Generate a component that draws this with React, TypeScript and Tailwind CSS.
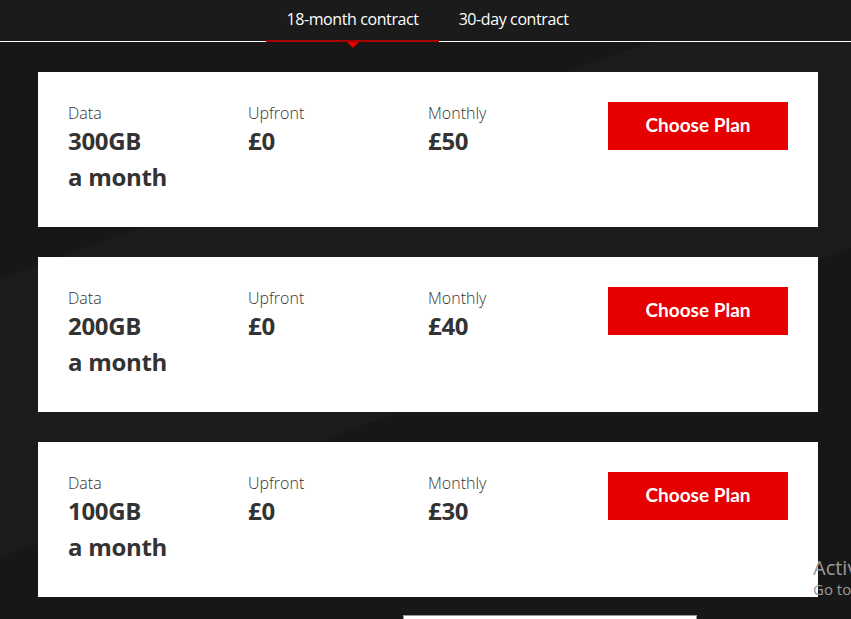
import React from "react";

const plans = [
  { data: "300GB", upfront: "£0", monthly: "£50" },
  { data: "200GB", upfront: "£0", monthly: "£40" },
  { data: "100GB", upfront: "£0", monthly: "£30" },
];

function Col({ label, value, sub }: { label: string; value: string; sub?: string }) {
  return (
    <div className="w-[180px] shrink-0">
      <div className="text-[16px] leading-[22px] font-light text-[#333]">{label}</div>
      <div className="text-[24px] leading-[36px] font-bold text-[#333] tracking-[-0.3px] -mt-[1px]">
        <div>{value}</div>
        {sub && <div>{sub}</div>}
      </div>
    </div>
  );
}

export default function App() {
  return (
    <div
      className="relative w-full h-[619px] overflow-hidden bg-[#171717]"
      style={{ fontFamily: '"Open Sans", "Noto Sans", sans-serif' }}
    >
      <div className="absolute inset-0 bg-[linear-gradient(160deg,transparent_0%,transparent_30%,rgba(255,255,255,0.018)_30%,rgba(255,255,255,0.018)_60%,transparent_60%)]" />
      <div className="relative">
        <div className="h-[42px] border-b border-white flex justify-center pl-[4px] bg-[#1b1b1b]">
          <div className="relative px-5 h-full flex items-start pt-[7px] text-white text-[16px] leading-[24px] tracking-[-0.4px]">
            18-month contract
            <div className="absolute left-0 right-0 bottom-[-1px] h-[2px] bg-[#a80000]" />
            <div className="absolute left-1/2 -translate-x-1/2 bottom-[-7px] w-0 h-0 border-l-[6px] border-r-[6px] border-t-[6px] border-l-transparent border-r-transparent border-t-[#e60000]" />
          </div>
          <div className="px-5 h-full flex items-start pt-[7px] text-white text-[16px] leading-[24px] tracking-[-0.4px]">
            30-day contract
          </div>
        </div>
        <div className="ml-[38px] w-[780px] mt-[30px] flex flex-col gap-[30px]">
          {plans.map((p) => (
            <div key={p.data} className="bg-white h-[155px] pl-[30px] pr-[30px] pt-[30px] flex">
              <Col label="Data" value={p.data} sub="a month" />
              <Col label="Upfront" value={p.upfront} />
              <Col label="Monthly" value={p.monthly} />
              <button
                className="ml-auto w-[180px] h-[48px] bg-[#e60000] text-white text-[19px] font-bold pb-[2px]"
                style={{ fontFamily: 'Lato, "Open Sans", sans-serif' }}
              >
                Choose Plan
              </button>
            </div>
          ))}
        </div>
        <div className="ml-[403px] mt-[18px] w-[294px] h-[10px] bg-white border border-[#999]" />
      </div>
      <div
        className="absolute left-[813px] top-[558px] text-[#9a9a9a] leading-none whitespace-nowrap"
        style={{ fontFamily: '"Open Sans", sans-serif' }}
      >
        <div className="text-[20px]">Activate Windows</div>
        <div className="text-[15px] mt-[4px]">Go to Settings to activate Windows.</div>
      </div>
    </div>
  );
}
